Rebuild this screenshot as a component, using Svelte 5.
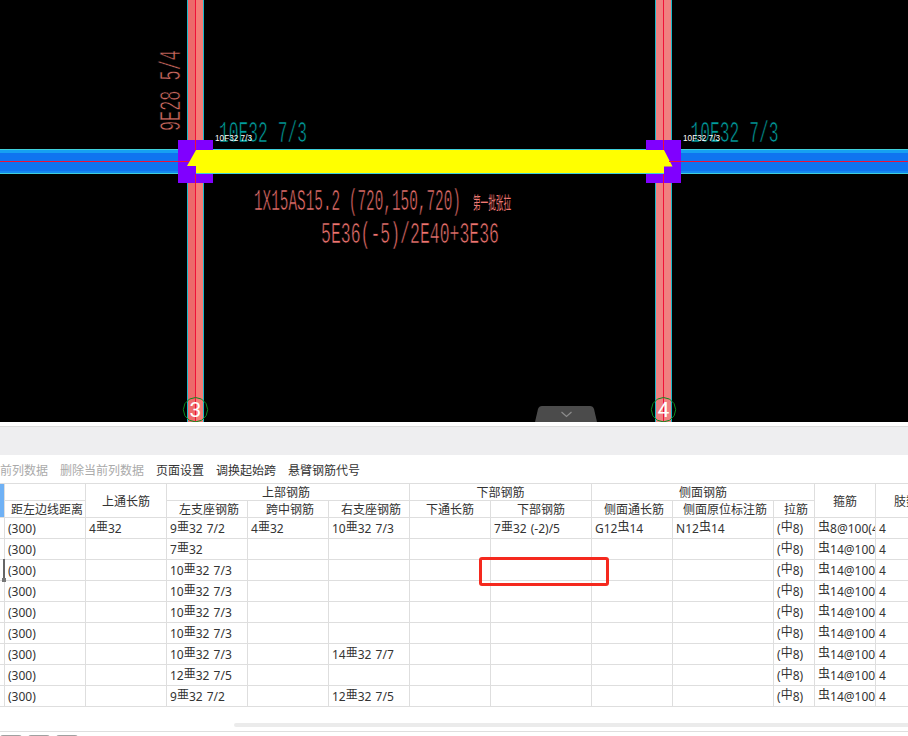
<script lang="ts">
	// table data: 亜 / 虫 / 中 are the rebar grade marks and get raised a little
	const rows = [
		["(300)", "4亜32", "9亜32 7/2", "4亜32", "10亜32 7/3", "", "7亜32 (-2)/5", "G12虫14", "N12虫14", "(中8)", "虫8@100(4)", "4"],
		["(300)", "", "7亜32", "", "", "", "", "", "", "(中8)", "虫14@100(4)", "4"],
		["(300)", "", "10亜32 7/3", "", "", "", "", "", "", "(中8)", "虫14@100(4)", "4"],
		["(300)", "", "10亜32 7/3", "", "", "", "", "", "", "(中8)", "虫14@100(4)", "4"],
		["(300)", "", "10亜32 7/3", "", "", "", "", "", "", "(中8)", "虫14@100(4)", "4"],
		["(300)", "", "10亜32 7/3", "", "", "", "", "", "", "(中8)", "虫14@100(4)", "4"],
		["(300)", "", "10亜32 7/3", "", "14亜32 7/7", "", "", "", "", "(中8)", "虫14@100(4)", "4"],
		["(300)", "", "12亜32 7/5", "", "", "", "", "", "", "(中8)", "虫14@100(4)", "4"],
		["(300)", "", "9亜32 7/2", "", "12亜32 7/5", "", "", "", "", "(中8)", "虫14@100(4)", "4"]
	];
	const widths = [5, 81, 81, 81, 81, 81, 81, 101, 81, 101, 41, 61, 61];

	const axes = [
		{ x: 195.5, label: "3", left: "#ec6a6a", right: "#f47c76" },
		{ x: 663.5, label: "4", left: "#f08080", right: "#f08080" }
	];

	function ring(cx: number, cy: number, r: number) {
		const pts = [];
		for (let i = 0; i < 12; i++) {
			const a = (i * Math.PI) / 6;
			pts.push(`${(cx + r * Math.cos(a)).toFixed(1)},${(cy + r * Math.sin(a)).toFixed(1)}`);
		}
		return pts.join(" ");
	}

	const parts = (s: string) => s.split(/([亜虫中])/);
</script>

<div class="page">
	<svg class="drawing" width="908" height="422" viewBox="0 0 908 422">
		<rect width="908" height="422" fill="#000" />

		{#each axes as a}
			<rect x={a.x - 8} y="0" width="8" height="422" fill={a.left} />
			<rect x={a.x} y="0" width="8" height="422" fill={a.right} />
			<path d="M{a.x - 8} 0V422M{a.x + 8} 0V422" stroke="#19b8c8" fill="none" />
		{/each}

		<!-- beams either side -->
		<g>
			<rect x="0" y="150" width="178" height="24" fill="#0f74f0" />
			<rect x="0" y="150" width="178" height="3" fill="#16a0f2" />
			<rect x="0" y="171" width="178" height="2" fill="#1488f0" />
			<rect x="681" y="150" width="227" height="24" fill="#0f74f0" />
			<rect x="681" y="150" width="227" height="3" fill="#16a0f2" />
			<rect x="681" y="171" width="227" height="2" fill="#1488f0" />
			<path d="M0 149.5H908M0 173.5H908" stroke="#3fd0dc" fill="none" />
		</g>

		<!-- supports -->
		<path d="M178 140H213V150H196V174H213V183H178Z" fill="#8000ff" />
		<path d="M681 140H646V150H664V174H646V183H681Z" fill="#8000ff" />

		<polygon points="196,150 664,150 672.5,166.5 664,166.5 664,173 196,173 196,166 187,166" fill="#ff0" />

		<path
			d="M195.5 0V150M195.5 174V422M663.5 0V150M663.5 174V422M0 161.5H189M669 161.5H908"
			stroke="#ef1238"
			fill="none"
		/>

		<text class="cad" x="219" y="142" textLength="88" lengthAdjust="spacingAndGlyphs" fill="#00a0a0">10E32 7/3</text>
		<text class="cad" x="690.5" y="142" textLength="88" lengthAdjust="spacingAndGlyphs" fill="#00a0a0">10E32 7/3</text>
		<text class="tiny" x="215" y="141" textLength="37" lengthAdjust="spacingAndGlyphs">10F32 7/3</text>
		<text class="tiny" x="683" y="141" textLength="37" lengthAdjust="spacingAndGlyphs">10F32 7/3</text>
		<text class="cad" transform="translate(180 131) rotate(-90)" textLength="81" lengthAdjust="spacingAndGlyphs" fill="#d06a60">9E28 5/4</text>
		<text class="cad" x="254" y="210" textLength="207" lengthAdjust="spacingAndGlyphs" fill="#f07470">1X15AS15.2 (720,150,720)</text>
		<text class="cjk" x="473" y="209" textLength="38" lengthAdjust="spacingAndGlyphs" fill="#f07a74">第一批张拉</text>
		<text class="cad" x="321" y="243" textLength="178" lengthAdjust="spacingAndGlyphs" fill="#f07470">5E36(-5)/2E40+3E36</text>

		{#each axes as a}
			<polygon points={ring(a.x, 409.7, 12.2)} fill="none" stroke="#0a8a1e" />
			<text class="axis" x={a.x} y="417">{a.label}</text>
		{/each}

		<!-- collapse handle -->
		<path d="M535 422L538 409Q539 406 542 406H590Q593 406 594 409L597 422Z" fill="#4b4b4b" />
		<path d="M561.5 412L566.5 416.5L571.5 412" fill="none" stroke="#8c8c8c" stroke-width="1.2" />
	</svg>

	<div class="gap"></div>
	<div class="band"></div>

	<div class="toolbar">
		<span class="off">前列数据</span>
		<span class="off">删除当前列数据</span>
		<span>页面设置</span>
		<span>调换起始跨</span>
		<span>悬臂钢筋代号</span>
	</div>

	<div class="grid-wrap">
		<table>
			<colgroup>
				{#each widths as w}
					<col style="width: {w}px" />
				{/each}
			</colgroup>
			<thead>
				<tr>
					<th class="gutter" rowspan="2"></th>
					<th></th>
					<th rowspan="2">上通长筋</th>
					<th colspan="3" class="shift-l">上部钢筋</th>
					<th colspan="2">下部钢筋</th>
					<th colspan="3">侧面钢筋</th>
					<th rowspan="2">箍筋</th>
					<th rowspan="2">肢数</th>
				</tr>
				<tr>
					<th class="shift">距左边线距离</th>
					<th class="shift">左支座钢筋</th>
					<th class="shift">跨中钢筋</th>
					<th class="shift">右支座钢筋</th>
					<th>下通长筋</th>
					<th>下部钢筋</th>
					<th class="shift">侧面通长筋</th>
					<th class="shift">侧面原位标注筋</th>
					<th class="shift">拉筋</th>
				</tr>
			</thead>
			<tbody>
				{#each rows as row}
					<tr>
						<td></td>
						{#each row as cell}
							<td>
								{#each parts(cell) as p}
									{#if p === "亜" || p === "虫" || p === "中"}<span class="mark">{p}</span>{:else}{p}{/if}
								{/each}
							</td>
						{/each}
					</tr>
				{/each}
			</tbody>
		</table>
		<div class="row-marker"></div>
		<div class="callout"></div>
	</div>

	<div class="scroll"></div>
	<div class="tabs">
		<i></i>
		<i></i>
		<i></i>
	</div>
</div>

<style>
	:global(body) {
		margin: 0;
		background: #fff;
	}

	.page {
		width: 908px;
		height: 736px;
		overflow: hidden;
		display: flex;
		flex-direction: column;
		background: #fff;
		font-family: "Noto Sans", "Noto Sans CJK SC", sans-serif;
		font-size: 12px;
		color: #333;
	}

	.drawing {
		display: block;
		flex: none;
	}

	/* black outline eats into the glyphs so they read as thin plotter strokes */
	.cad {
		font-family: "Liberation Mono", monospace;
		font-size: 29px;
		stroke: #000;
		stroke-width: 0.7px;
	}

	.cjk {
		font-family: "Noto Sans CJK SC", sans-serif;
		font-size: 17px;
	}

	.tiny {
		font-family: "Liberation Sans", sans-serif;
		font-size: 9px;
		fill: #fff;
	}

	.axis {
		font-family: Roboto, "Liberation Sans", sans-serif;
		font-size: 21px;
		fill: #fff;
		text-anchor: middle;
	}

	.gap {
		height: 4px;
		flex: none;
		border-bottom: 1px solid #dcdcdc;
		box-sizing: content-box;
	}

	.band {
		height: 28px;
		flex: none;
		background: #eeeef0;
	}

	.toolbar {
		height: 28px;
		flex: none;
		box-sizing: border-box;
		padding-top: 2px;
		display: flex;
		align-items: center;
		gap: 12px;
		white-space: nowrap;
	}

	.off {
		color: #aaa;
	}

	.grid-wrap {
		position: relative;
		flex: none;
		overflow: hidden;
		border-top: 1px solid #dedede;
	}

	table {
		width: 937px;
		table-layout: fixed;
		border-collapse: separate;
		border-spacing: 0;
	}

	th,
	td {
		box-sizing: border-box;
		padding: 0;
		overflow: hidden;
		white-space: nowrap;
		border-right: 1px solid #dedede;
		border-bottom: 1px solid #dedede;
	}

	th {
		height: 17px;
		padding-top: 1px;
		font-weight: 400;
		line-height: 15px;
		text-align: center;
	}

	.shift {
		padding-left: 4px;
	}

	.shift-l {
		padding-right: 4px;
	}

	.gutter {
		background: #6fb1f5;
	}

	td {
		height: 21px;
		padding: 1px 0 0 3px;
		line-height: 19px;
		word-spacing: 1px;
	}

	tbody td:first-child {
		padding: 0;
	}

	.mark {
		display: inline-block;
		width: 12px;
		font-size: 12px;
		text-align: center;
		position: relative;
		top: -2px;
	}

	.row-marker {
		position: absolute;
		left: 0;
		top: 75px;
		width: 3px;
		height: 21px;
		border-right: 2px solid #666;
	}

	.row-marker::after {
		content: "";
		position: absolute;
		right: -3px;
		bottom: -2px;
		width: 4px;
		height: 4px;
		background: #777;
	}

	.callout {
		position: absolute;
		left: 479px;
		top: 73px;
		width: 130px;
		height: 29px;
		box-sizing: border-box;
		border: 3px solid #f5291e;
		border-radius: 3px;
	}

	.scroll {
		flex: none;
		height: 4px;
		margin: 16px 0 0 234px;
		border-radius: 2px 0 0 2px;
		background: #ebebeb;
	}

	.tabs {
		flex: none;
		display: flex;
		gap: 6px;
		margin-top: 4px;
		padding-top: 3px;
		border-top: 1px solid #dedede;
	}

	.tabs i {
		width: 22px;
		height: 3px;
		border-radius: 3px 3px 0 0;
		background: #a0a0a0;
	}
</style>
